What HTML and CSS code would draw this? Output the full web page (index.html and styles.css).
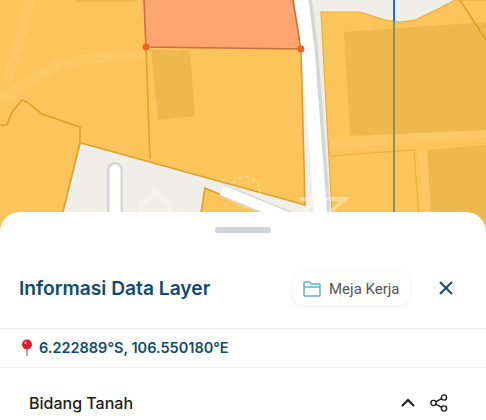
FILE: index.html
```html
<!DOCTYPE html>
<html lang="id">
<head>
    <meta charset="UTF-8">
    <title>Informasi Data Layer</title>
    <link rel="stylesheet" href="styles.css">
</head>
<body>
    <div class="map">
        <svg width="486" height="232" viewBox="0 0 486 232">
            <rect width="486" height="232" fill="#fbc55c"/>
            <!-- jalan kecil -->
            <path d="M30 0 L8 80 M0 100 C30 80 55 62 80 60 C105 58 125 55 146 53" class="road"/>
            <!-- area abu-abu -->
            <path d="M293 0 L455 0 L440 8 L415 20 L400 22 L385 20 L360 12 L321 12 L333 232 L305 232 L301 49 Z" fill="#efeee8"/>
            <path d="M81 143 L305 205 L310 232 L58 232 Z" fill="#efeee8"/>
            <path d="M-2 125 L7 125 L12 112 L22 100 L27 102 L42 114 L80 127 L80 143 L58 232 L-2 232 Z" fill="#fbc55c" class="lot"/>
            <path d="M321 12 L360 12 L385 20 L400 22 L415 20 L440 8 L455 0 L488 0 L488 232 L333 232 Z" fill="#fbc55c" class="lot-soft"/>
            <path d="M330 143 L486 133 M424 150 L430 232" class="road"/>
            <!-- bangunan -->
            <path d="M75 0 L135 0 L135 2 L77 2 Z M151 50 L190 50 L195 116 L158 120 Z" fill="#edb94f"/>
            <path d="M344 32 L486 22 L486 130 L350 136 Z" fill="#edb94f"/>
            <path d="M427 150 L486 145 L486 232 L432 232 Z" fill="#edb94f"/>
            <path d="M330 156 L414 150 L420 232" class="lot-soft" fill="none"/>
            <!-- persil -->
            <path d="M146 47 L150 159 M81 143 L305 205 L301 49 M460 0 L486 40" class="lot" fill="none"/>
            <path d="M205 188 L257 210 L262 232 L198 232 Z" fill="#fbc55c" class="lot"/>
            <path d="M144 0 L147 48 L301 49 L293 0 Z" fill="#ffa570"/>
            <path d="M144 0 L146 47 L301 49 L293 0" fill="none" stroke="#c9703f" stroke-width="1.6"/>
            <!-- jalan putih -->
            <path d="M304 0 L310 49 L324 232" stroke="#d6d6d8" stroke-width="16" fill="none"/>
            <path d="M302 0 L308 49 L322 232" stroke="#fff" stroke-width="13" fill="none"/>
            <path d="M115 232 L115 170" stroke="#d6d6d8" stroke-width="16" stroke-linecap="round" fill="none"/>
            <path d="M115 232 L115 170" stroke="#fff" stroke-width="11" stroke-linecap="round" fill="none"/>
            <path d="M222 190 L290 218" stroke="#d8d8d8" stroke-width="13" fill="none"/>
            <path d="M222 190 L290 218" stroke="#fff" stroke-width="10" fill="none"/>
            <circle cx="146" cy="47" r="3.4" fill="#f0602b"/>
            <circle cx="301" cy="49" r="3.4" fill="#f0602b"/>
            <!-- garis ukur -->
            <path d="M394 0 V21" stroke="#1a6fe0" stroke-width="2"/>
            <path d="M394 21 V232" stroke="#8f8a6a" stroke-width="2"/>
            <!-- watermark -->
            <g class="mark" fill="none">
                <path d="M141 212 V204 L155 193 L170 204 V212" stroke-width="6"/>
                <circle cx="245" cy="192" r="15" stroke-width="1.4" stroke-dasharray="4 3"/>
                <path d="M300 199 H315 L305 212 M325 199 H345 L330 212" stroke-width="4"/>
            </g>
        </svg>
    </div>

    <div class="sheet">
        <div class="handle"></div>

        <div class="sheet-head">
            <h1 class="title">Informasi Data Layer</h1>
            <button class="workspace">
                <svg width="18" height="16" viewBox="0 0 18 16" fill="none" stroke="#5fb3cc" stroke-width="1.5">
                    <path d="M1 14.2 V2 Q1 1 2 1 H6.5 L8.5 3 H16 Q17 3 17 4 V14.2 Q17 15 16 15 H2 Q1 15 1 14.2 Z M1 6 H17"/>
                </svg>
                Meja Kerja
            </button>
            <button class="close">
                <svg width="16" height="16" viewBox="0 0 16 16" fill="none" stroke="#0f4c6b" stroke-width="2">
                    <path d="M2 2 L14 14 M14 2 L2 14"/>
                </svg>
            </button>
        </div>

        <div class="coords">
            <svg width="14" height="17" viewBox="0 0 14 17">
                <path d="M7 8 L7 17" stroke="#8d99a3" stroke-width="1.6"/>
                <circle cx="7" cy="5.5" r="5" fill="#d8202c"/>
                <circle cx="5.4" cy="3.8" r="1.2" fill="#f28b8f"/>
            </svg>
            <span>6.222889°S, 106.550180°E</span>
        </div>

        <div class="layer-row">
            <span class="layer-name">Bidang Tanah</span>
            <div class="layer-actions">
                <svg width="16" height="10" viewBox="0 0 16 10" fill="none" stroke="#1c1c1c" stroke-width="2">
                    <path d="M2 8 L8 2 L14 8"/>
                </svg>
                <svg width="18" height="18" viewBox="0 0 18 18" fill="none" stroke="#1c1c1c" stroke-width="1.4">
                    <circle cx="3.5" cy="9" r="2.6"/>
                    <circle cx="14" cy="3.5" r="2.6"/>
                    <circle cx="14" cy="14.5" r="2.6"/>
                    <path d="M5.8 7.8 L11.7 4.7 M5.8 10.2 L11.7 13.3"/>
                </svg>
            </div>
        </div>
    </div>
</body>
</html>
```

FILE: styles.css
```css
* {
    margin: 0;
    padding: 0;
    box-sizing: border-box;
}

body {
    width: 486px;
    height: 420px;
    overflow: hidden;
    background: #fff;
    font-family: Inter, "Noto Sans", sans-serif;
}

.map {
    height: 232px;
}

.map svg {
    display: block;
}

.road {
    fill: none;
    stroke: #fcc964;
    stroke-width: 10;
}

.lot {
    stroke: #dda02a;
    stroke-width: 1.6;
}

.lot-soft {
    stroke: #e9ae3f;
    stroke-width: 1.2;
}

.mark {
    stroke: #fff;
    opacity: 0.35;
}

.sheet {
    position: relative;
    margin-top: -20px;
    height: 208px;
    background: #fff;
    border-radius: 20px 20px 0 0;
}

.handle {
    position: absolute;
    top: 15px;
    left: 215px;
    width: 56px;
    height: 6px;
    border-radius: 3px;
    background: #cfd3dd;
}

.sheet-head {
    height: 117px;
    padding: 60px 32px 0 19px;
    display: flex;
    align-items: flex-start;
    border-bottom: 1px solid #f0f0f0;
}

.title {
    flex: 1;
    margin-top: 4px;
    font-size: 19.2px;
    line-height: 25px;
    font-weight: 600;
    color: #0f4c6b;
}

.workspace {
    width: 117px;
    height: 33px;
    padding-left: 10px;
    margin-right: 28px;
    display: flex;
    align-items: center;
    gap: 8px;
    border: none;
    border-radius: 10px;
    background: #fff;
    box-shadow: 0 1px 5px rgba(0, 0, 0, 0.07);
    font-family: Roboto, sans-serif;
    font-size: 15px;
    color: #555;
}

.close {
    margin-top: 8px;
    width: 16px;
    height: 16px;
    border: none;
    background: none;
}

.coords {
    height: 39px;
    padding: 0 0 2px 20px;
    display: flex;
    align-items: center;
    gap: 5px;
    border-bottom: 1px solid #f2f2f2;
    font-size: 14.5px;
    font-weight: 600;
    color: #0f4c6b;
}

.layer-row {
    padding: 25px 38px 0 29px;
    display: flex;
    align-items: center;
    justify-content: space-between;
}

.layer-name {
    font-size: 16px;
    font-weight: 500;
    color: #1c1c1c;
}

.layer-actions {
    display: flex;
    align-items: center;
    gap: 14px;
}
```
